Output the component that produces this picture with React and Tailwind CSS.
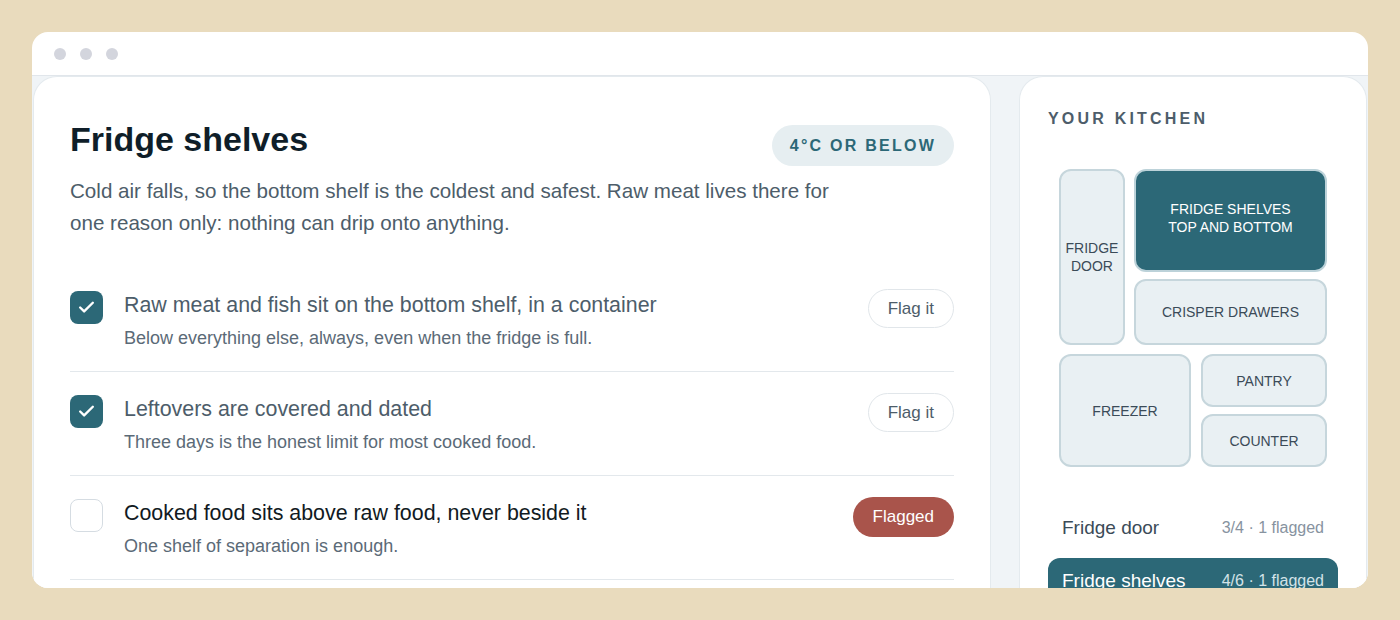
import { Check } from 'lucide-react';

const items = [
  { title: 'Raw meat and fish sit on the bottom shelf, in a container', note: 'Below everything else, always, even when the fridge is full.', done: true, flagged: false },
  { title: 'Leftovers are covered and dated', note: 'Three days is the honest limit for most cooked food.', done: true, flagged: false },
  { title: 'Cooked food sits above raw food, never beside it', note: 'One shelf of separation is enough.', done: false, flagged: true },
];

function Zone({ label, active, className }) {
  return (
    <div
      className={
        'flex items-center justify-center text-center rounded-[12px] border-2 text-[14px] leading-[18px] uppercase ' +
        (active
          ? 'bg-[#2c6877] border-[#bcd2d9] text-white'
          : 'bg-[#e9f0f3] border-[#c6d6dc] text-[#3b4b58]') +
        ' ' + className
      }
    >
      {label}
    </div>
  );
}

export default function App() {
  return (
    <div className="h-[620px] bg-[#e9dbbd] p-8 overflow-hidden" style={{ fontFamily: '"Liberation Sans", Arial, sans-serif' }}>
      <div className="h-full bg-white rounded-[16px] overflow-hidden flex flex-col">
        <div className="h-[44px] flex items-center gap-[14px] px-[22px] border-b border-[#e1e6eb] shrink-0">
          <span className="w-[12px] h-[12px] rounded-full bg-[#d3d5dd]" />
          <span className="w-[12px] h-[12px] rounded-full bg-[#d3d5dd]" />
          <span className="w-[12px] h-[12px] rounded-full bg-[#d3d5dd]" />
        </div>
        <div className="flex-1 bg-[#f0f4f7] flex gap-7 px-px min-h-0">
          <div className="w-[958px] shrink-0 bg-white rounded-t-[24px] border border-b-0 border-[#e4eaee] px-9 pt-[42px]">
            <div className="flex items-start justify-between">
              <h1 className="text-[34px] leading-[40px] font-bold text-[#0f1e29]">Fridge shelves</h1>
              <span className="mt-[6px] h-[41px] px-[18px] flex items-center rounded-full bg-[#e6eef1] text-[#2c6877] text-[16px] font-bold tracking-[0.14em]">4°C OR BELOW</span>
            </div>
            <p className="mt-[9px] max-w-[790px] text-[20.6px] leading-[32px] text-[#4d5d6a]">
              Cold air falls, so the bottom shelf is the coldest and safest. Raw meat lives there for one reason only: nothing can drip onto anything.
            </p>
            <div className="mt-[29px]">
              {items.map((it, i) => (
                <div key={i} className="flex items-start gap-[21px] pt-[24px] pb-[21px] border-b border-[#e3e8ec]">
                  <div
                    className={
                      'mt-[-1px] w-[33px] h-[33px] shrink-0 rounded-[8px] flex items-center justify-center ' +
                      (it.done ? 'bg-[#2c6877]' : 'bg-white border border-[#d5dce2]')
                    }
                  >
                    {it.done && <Check size={19} strokeWidth={3} color="#ffffff" />}
                  </div>
                  <div className="flex-1">
                    <div className={'text-[21.4px] leading-[26px] ' + (it.done ? 'text-[#4d5d6a]' : 'text-[#111a22]')}>{it.title}</div>
                    <div className="mt-[8px] text-[18px] leading-[24px] text-[#5b6a77]">{it.note}</div>
                  </div>
                  {it.flagged ? (
                    <button className="mt-[-3px] h-[40px] px-[20px] rounded-full bg-[#a9544b] text-white text-[17px]">Flagged</button>
                  ) : (
                    <button className="mt-[-3px] h-[39px] px-[19px] rounded-full bg-white border border-[#e1e6ea] text-[#4d5d6a] text-[17px]">Flag it</button>
                  )}
                </div>
              ))}
            </div>
          </div>
          <div className="w-[348px] shrink-0 bg-white rounded-t-[24px] border border-b-0 border-[#e4eaee] px-[28px] pt-[32px]">
            <div className="text-[16px] leading-[20px] font-bold tracking-[0.2em] text-[#4d5d6a]">YOUR KITCHEN</div>
            <div className="mt-[40px] w-[268px] mx-auto flex flex-col gap-[9px]">
              <div className="flex gap-[9px] h-[176px]">
                <Zone label={<>FRIDGE<br />DOOR</>} className="w-[66px]" />
                <div className="flex-1 flex flex-col gap-[7px]">
                  <Zone label={<>FRIDGE SHELVES<br />TOP AND BOTTOM</>} active className="h-[103px] pb-[6px]" />
                  <Zone label="CRISPER DRAWERS" className="flex-1" />
                </div>
              </div>
              <div className="flex gap-[10px] h-[113px]">
                <Zone label="FREEZER" className="w-[132px]" />
                <div className="flex-1 flex flex-col gap-[7px]">
                  <Zone label="PANTRY" className="flex-1" />
                  <Zone label="COUNTER" className="flex-1" />
                </div>
              </div>
            </div>
            <div className="mt-[38px] flex flex-col gap-[7px]">
              <div className="h-[46px] px-[14px] flex items-center justify-between rounded-[12px]">
                <span className="text-[19px] text-[#3b4b58]">Fridge door</span>
                <span className="text-[16px] text-[#8793a0]">3/4 · 1 flagged</span>
              </div>
              <div className="h-[46px] px-[14px] flex items-center justify-between rounded-[12px] bg-[#2c6877]">
                <span className="text-[19px] text-white">Fridge shelves</span>
                <span className="text-[16px] text-[#d3e3e8]">4/6 · 1 flagged</span>
              </div>
            </div>
          </div>
        </div>
      </div>
    </div>
  );
}
